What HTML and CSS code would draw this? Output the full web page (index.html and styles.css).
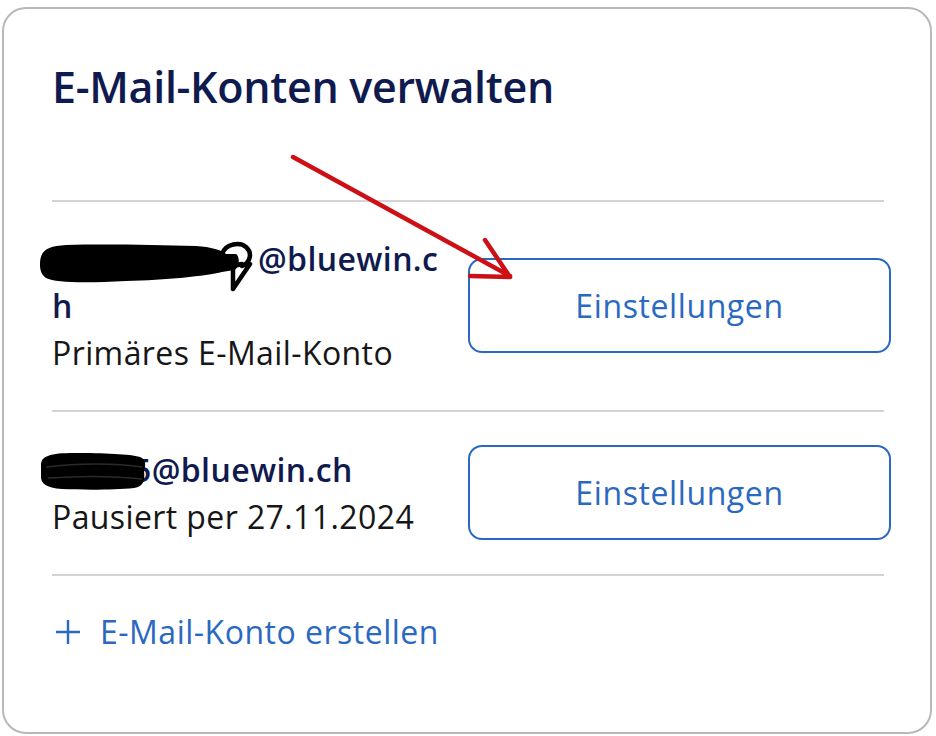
FILE: index.html
```html
<!DOCTYPE html>
<html lang="de">
<head>
    <meta charset="UTF-8">
    <meta name="viewport" content="width=device-width, initial-scale=1.0">
    <title>E-Mail-Konten verwalten</title>
    <link rel="stylesheet" href="styles.css">
</head>
<body>
    <div class="card">
        <h1 class="card-title">E-Mail-Konten verwalten</h1>

        <ul class="accounts">
            <li class="account">
                <div class="account-info">
                    <div class="account-address"><span class="redacted redacted-long"><svg viewBox="0 0 224 56" width="224" height="56"><path d="M4 26 C4 12 12 8 30 7 C70 6 120 7 160 8 C175 9 186 12 190 16 L200 16 C204 18 204 30 198 32 L186 34 C170 38 130 42 90 43 C50 45 20 45 10 40 C5 36 4 32 4 26 Z" fill="#000"/><path d="M186 16 C190 5 204 4 210 9 C217 15 214 25 206 28 M214 26 L197 51 M197 28 L197 51 M188 24 C194 28 200 28 206 26" fill="none" stroke="#000" stroke-width="4.5" stroke-linecap="round" stroke-linejoin="round"/></svg></span>@bluewin.ch</div>
                    <div class="account-status">Primäres E-Mail-Konto</div>
                </div>
                <button class="btn-settings">Einstellungen</button>
            </li>
            <li class="account">
                <div class="account-info">
                    <div class="account-address"><span class="redacted redacted-short"><svg viewBox="0 0 116 44" width="116" height="44"><path d="M3 16 C3 7 12 4 36 4 C66 4 92 5 102 8 C108 10 108 16 106 22 C107 30 106 38 96 39 C76 41 46 41 24 40 C8 39 2 34 3 26 Z" fill="#000"/><path d="M8 18 C40 14 78 14 104 18 M10 29 C40 27 78 27 104 30" fill="none" stroke="#2a2a2a" stroke-width="1.5"/></svg></span>5@bluewin.ch</div>
                    <div class="account-status">Pausiert per 27.11.2024</div>
                </div>
                <button class="btn-settings">Einstellungen</button>
            </li>
        </ul>

        <a class="add-account" href="#">
            <svg class="add-icon" viewBox="0 0 26 26" width="26" height="26"><path d="M13 1 V25 M1 13 H25" stroke="currentColor" stroke-width="2.4" fill="none"/></svg>
            E-Mail-Konto erstellen
        </a>

        <!-- red arrow drawn over the screenshot -->
        <svg class="annotation" viewBox="0 0 936 736" width="936" height="736">
            <path d="M293 157 L510 276 M485 240 L510 277 M470 276 L510 277" stroke="#cc1016" stroke-width="4.5" stroke-linecap="round" fill="none"/>
        </svg>
    </div>
</body>
</html>
```

FILE: styles.css
```css
:root {
    --navy: #0f1a4f;
    --text: #161616;
    --blue: #2a69c1;
    --border: #b8b8b8;
    --divider: #d4d4d4;
}

* {
    box-sizing: border-box;
}

body {
    margin: 0;
    background-color: #ffffff;
    font-family: 'Open Sans', 'Noto Sans', sans-serif;
    color: var(--text);
}

.card {
    position: relative;
    margin: 7px 4px 0 2px;
    height: 727px;
    border: 2px solid var(--border);
    border-radius: 24px;
    padding: 52px 46px 0 48px;
}

.card-title {
    margin: 0 0 87px;
    font-size: 43px;
    font-weight: 600;
    line-height: 52px;
    letter-spacing: -0.3px;
    color: var(--navy);
}

.accounts {
    list-style: none;
    margin: 0;
    padding: 0;
}

.account {
    display: flex;
    align-items: center;
    gap: 28px;
    padding: 33px 0 34px;
    border-top: 2px solid var(--divider);
}

.accounts .account:last-child {
    border-bottom: 2px solid var(--divider);
}

.account-info {
    flex: 1;
    font-size: 32px;
    line-height: 47px;
    letter-spacing: 0.4px;
}

.account-address {
    font-weight: 600;
    color: var(--navy);
    word-break: break-all;
}

.redacted {
    position: relative;
    display: inline-block;
    height: 20px;
}

.redacted svg {
    position: absolute;
    top: -13px;
}

.redacted-long {
    width: 206px;
}

.redacted-long svg {
    left: -16px;
}

.redacted-short {
    width: 81px;
}

.redacted-short svg {
    left: -14px;
}

.btn-settings {
    flex: none;
    width: 423px;
    height: 95px;
    margin-right: -7px;
    border: 2px solid var(--blue);
    border-radius: 14px;
    background-color: #ffffff;
    color: var(--blue);
    font-family: inherit;
    font-size: 32px;
    letter-spacing: 0.6px;
    cursor: pointer;
}

.add-account {
    display: flex;
    align-items: center;
    gap: 19px;
    margin-top: 32px;
    padding-left: 3px;
    font-size: 32px;
    line-height: 47px;
    letter-spacing: 0.5px;
    color: var(--blue);
    text-decoration: none;
}

.add-icon {
    flex: none;
}

.annotation {
    position: absolute;
    top: -9px;
    left: -4px;
    pointer-events: none;
}
```
